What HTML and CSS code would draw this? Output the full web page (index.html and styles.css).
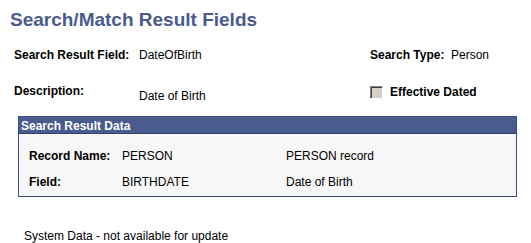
FILE: index.html
```html
<!DOCTYPE html>
<html>
<head>
<meta charset="utf-8">
<link rel="stylesheet" href="styles.css">
</head>
<body>
<h1 class="title">Search/Match Result Fields</h1>
<div class="fields">
  <div class="lbl r1">Search Result Field:</div>
  <div class="val r1">DateOfBirth</div>
  <div class="lbl r1 rl">Search Type:</div>
  <div class="val r1">Person</div>
  <div class="lbl r2">Description:</div>
  <div class="val r2 low">Date of Birth</div>
  <div class="check r2">
    <span class="box-cb"></span>
    <span class="lbl">Effective Dated</span>
  </div>
</div>
<div class="group">
  <div class="group-head">Search Result Data</div>
  <div class="group-body">
    <div class="lbl">Record Name:</div>
    <div class="val">PERSON</div>
    <div class="val">PERSON record</div>
    <div class="lbl">Field:</div>
    <div class="val">BIRTHDATE</div>
    <div class="val">Date of Birth</div>
  </div>
</div>
<p class="note">System Data - not available for update</p>
</body>
</html>
```
FILE: styles.css
```css
html, body {
  margin: 0;
  padding: 0;
  background: #ffffff;
}
body {
  font-family: "Liberation Sans", Arial, sans-serif;
  font-size: 12px;
  line-height: 14px;
  color: #000000;
}
.title {
  margin: 0;
  padding: 9px 0 0 10px;
  font-size: 19px;
  line-height: 22px;
  font-weight: bold;
  color: #4a5a8e;
}
.fields {
  display: grid;
  grid-template-columns: 125px 231px 81px auto;
  row-gap: 22px;
  padding-left: 14px;
  margin-top: 17px;
}
.lbl {
  font-weight: bold;
}
.r1 {
  grid-row: 1;
}
.r2 {
  grid-row: 2;
}
.low {
  padding-top: 5px;
}
.check {
  grid-column: 3 / 5;
  display: flex;
  align-items: center;
  gap: 7px;
  margin-top: 1px;
  align-self: start;
}
.box-cb {
  width: 11px;
  height: 11px;
  background: #d4d0c8;
  border-top: 1px solid #808080;
  border-left: 1px solid #808080;
  border-right: 1px solid #ffffff;
  border-bottom: 1px solid #ffffff;
  box-shadow: inset 1px 1px 0 #404040;
}
.group {
  margin: 13px 0 0 18px;
  width: 497px;
  border: 1px solid #3e4c7e;
  background: #f7f7f7;
}
.group-head {
  background: #4a5b8d;
  color: #ffffff;
  font-weight: bold;
  padding: 2px 2px 0 2px;
  height: 14px;
  border-bottom: 1px solid #34416e;
}
.group-body {
  display: grid;
  grid-template-columns: 93px 164px auto;
  row-gap: 12px;
  padding: 15px 0 7px 10px;
}
.note {
  margin: 32px 0 0 24px;
}
```
